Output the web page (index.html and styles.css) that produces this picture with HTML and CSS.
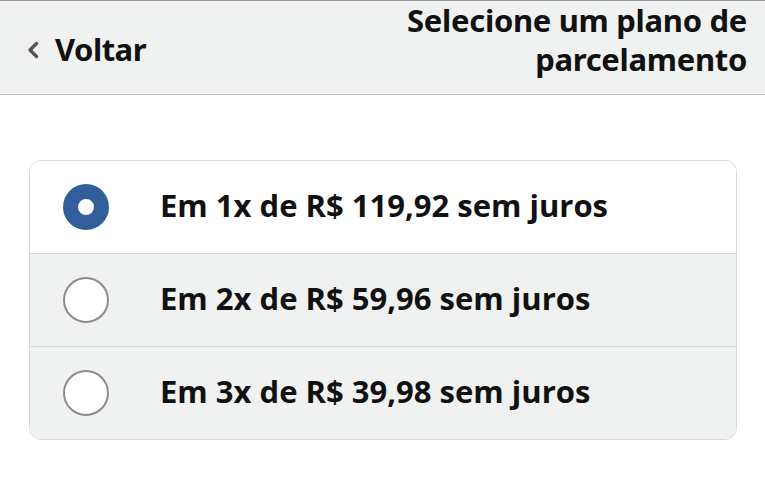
FILE: index.html
```html
<!DOCTYPE html>
<html lang="pt-BR">
  <head>
    <meta charset="UTF-8" />
    <meta name="viewport" content="width=device-width, initial-scale=1.0" />
    <title>Selecione um plano de parcelamento</title>
    <link rel="stylesheet" href="styles.css">
  </head>
  <body>
    <header class="top-bar">
      <a class="back" href="#">
        <svg class="back-icon" width="14" height="18" viewBox="0 0 14 18">
          <path d="M10.5 2.5 L4 9 L10.5 15.5" fill="none" stroke="#555" stroke-width="3.4" stroke-linecap="round" stroke-linejoin="round" />
        </svg>
        <span>Voltar</span>
      </a>
      <h1 class="title">Selecione um plano de<br />parcelamento</h1>
    </header>

    <main class="content">
      <div class="plans">
        <label class="plan selected">
          <span class="radio"></span>
          <span class="plan-text">Em 1x de R$ 119,92 sem juros</span>
        </label>
        <label class="plan">
          <span class="radio"></span>
          <span class="plan-text">Em 2x de R$ 59,96 sem juros</span>
        </label>
        <label class="plan">
          <span class="radio"></span>
          <span class="plan-text">Em 3x de R$ 39,98 sem juros</span>
        </label>
      </div>
    </main>
  </body>
</html>
```

FILE: styles.css
```css
body {
  margin: 0;
  padding: 0;
  background: #fff;
  font-family: "Open Sans", "Noto Sans", sans-serif;
  color: #111;
}

.top-bar {
  display: flex;
  align-items: center;
  justify-content: space-between;
  height: 93px;
  padding: 0 18px 0 26px;
  background: #f0f1f1;
  border-top: 1px solid #9a9a9a;
  border-bottom: 1px solid #bdbdbd;
}

.back {
  display: flex;
  align-items: center;
  gap: 15px;
  padding-top: 3px;
  color: #111;
  text-decoration: none;
  font-family: "Noto Sans", sans-serif;
  font-size: 31px;
  font-weight: 700;
  letter-spacing: -0.5px;
}

.back-icon {
  margin-top: 1px;
}

.title {
  align-self: flex-start;
  margin: 0;
  text-align: right;
  font-family: "Noto Sans", sans-serif;
  font-size: 31px;
  line-height: 39px;
  font-weight: 700;
  letter-spacing: -0.3px;
}

.content {
  padding: 65px 28px 0 29px;
}

.plans {
  border: 1px solid #d8d9d9;
  border-radius: 12px;
  overflow: hidden;
}

.plan {
  display: flex;
  align-items: center;
  height: 92px;
  padding-left: 33px;
  background: #f0f1f1;
  border-top: 1px solid #d8d9d9;
}

.plan:first-child {
  border-top: none;
}

.plan.selected {
  background: #fff;
}

.radio {
  width: 46px;
  height: 46px;
  box-sizing: border-box;
  border-radius: 50%;
  border: 2px solid #8c8c8c;
  background: #fff;
  margin-right: 51px;
  flex-shrink: 0;
}

.selected .radio {
  border: 15px solid #325f9b;
}

.plan-text {
  font-size: 31px;
  font-weight: 700;
  padding-bottom: 5px;
}
```
